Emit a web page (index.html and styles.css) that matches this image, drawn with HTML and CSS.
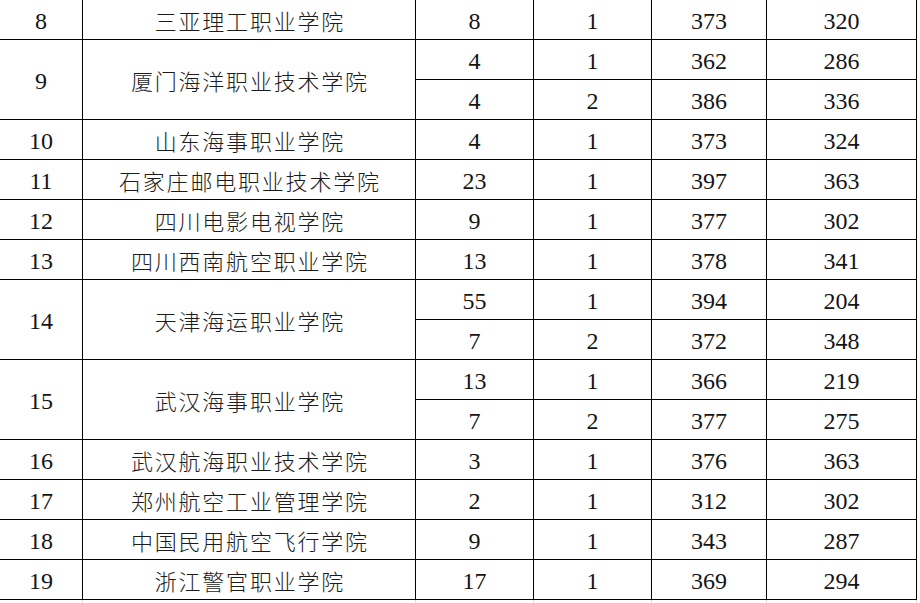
FILE: index.html
```html
<!DOCTYPE html>
<html lang="zh-CN">
<head>
<meta charset="utf-8">
<title>院校录取分数</title>
<link rel="stylesheet" href="styles.css">
</head>
<body>
<div class="sheet">
  <div class="c n">8</div><div class="c name">三亚理工职业学院</div><div class="c n">8</div><div class="c n">1</div><div class="c n">373</div><div class="c n last">320</div>
  <div class="c n span">9</div><div class="c name span">厦门海洋职业技术学院</div><div class="c n">4</div><div class="c n">1</div><div class="c n">362</div><div class="c n last">286</div>
  <div class="c n">4</div><div class="c n">2</div><div class="c n">386</div><div class="c n last">336</div>
  <div class="c n">10</div><div class="c name">山东海事职业学院</div><div class="c n">4</div><div class="c n">1</div><div class="c n">373</div><div class="c n last">324</div>
  <div class="c n">11</div><div class="c name">石家庄邮电职业技术学院</div><div class="c n">23</div><div class="c n">1</div><div class="c n">397</div><div class="c n last">363</div>
  <div class="c n">12</div><div class="c name">四川电影电视学院</div><div class="c n">9</div><div class="c n">1</div><div class="c n">377</div><div class="c n last">302</div>
  <div class="c n">13</div><div class="c name">四川西南航空职业学院</div><div class="c n">13</div><div class="c n">1</div><div class="c n">378</div><div class="c n last">341</div>
  <div class="c n span">14</div><div class="c name span">天津海运职业学院</div><div class="c n">55</div><div class="c n">1</div><div class="c n">394</div><div class="c n last">204</div>
  <div class="c n">7</div><div class="c n">2</div><div class="c n">372</div><div class="c n last">348</div>
  <div class="c n span">15</div><div class="c name span">武汉海事职业学院</div><div class="c n">13</div><div class="c n">1</div><div class="c n">366</div><div class="c n last">219</div>
  <div class="c n">7</div><div class="c n">2</div><div class="c n">377</div><div class="c n last">275</div>
  <div class="c n">16</div><div class="c name">武汉航海职业技术学院</div><div class="c n">3</div><div class="c n">1</div><div class="c n">376</div><div class="c n last">363</div>
  <div class="c n">17</div><div class="c name">郑州航空工业管理学院</div><div class="c n">2</div><div class="c n">1</div><div class="c n">312</div><div class="c n last">302</div>
  <div class="c n">18</div><div class="c name">中国民用航空飞行学院</div><div class="c n">9</div><div class="c n">1</div><div class="c n">343</div><div class="c n last">287</div>
  <div class="c n">19</div><div class="c name">浙江警官职业学院</div><div class="c n">17</div><div class="c n">1</div><div class="c n">369</div><div class="c n last">294</div>
</div>
<div class="grid-tail">
  <div class="g"></div><div class="g"></div><div class="g"></div><div class="g"></div><div class="g"></div><div class="g"></div>
</div>
</body>
</html>
```

FILE: styles.css
```css
html, body {
  margin: 0;
  padding: 0;
  background: #ffffff;
}
body {
  width: 920px;
  height: 603px;
  overflow: hidden;
  color: #141414;
}
.sheet, .grid-tail {
  display: grid;
  grid-template-columns: 83px 333px 118px 118px 115px 150px;
  width: 917px;
}
.sheet {
  grid-auto-rows: 40px;
}
.c {
  box-sizing: border-box;
  border-right: 1px solid #000;
  border-bottom: 1px solid #000;
  display: flex;
  align-items: center;
  justify-content: center;
  padding-top: 4px;
  white-space: nowrap;
}
.span {
  grid-row: span 2;
}
.n {
  font-family: "Liberation Serif", "Noto Sans CJK SC", serif;
  font-size: 24px;
}
.name {
  font-family: "Noto Sans CJK SC", "Noto Sans", sans-serif;
  font-size: 22px;
  letter-spacing: 1.8px;
  text-indent: 1.8px;
  font-weight: 300;
  color: #1c1c1c;
  padding-top: 1px;
}
.grid-tail {
  height: 4px;
}
.g {
  box-sizing: border-box;
  border-right: 1px solid #dcdcdc;
}
```
